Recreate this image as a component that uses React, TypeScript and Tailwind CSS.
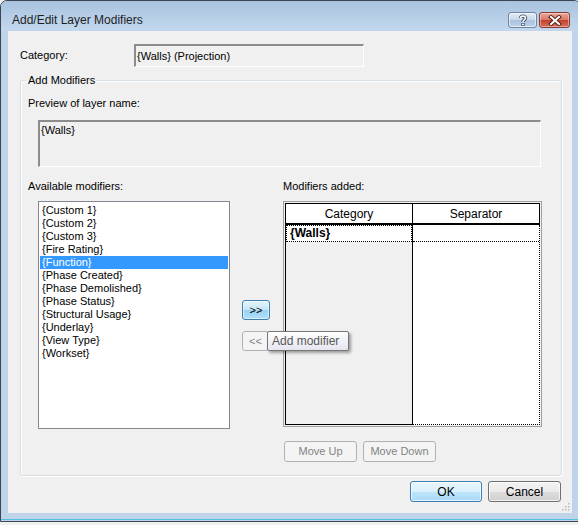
import React from "react";

const font = { fontFamily: '"Liberation Sans", Arial, sans-serif' };

const modifiers = [
  "{Custom 1}",
  "{Custom 2}",
  "{Custom 3}",
  "{Fire Rating}",
  "{Function}",
  "{Phase Created}",
  "{Phase Demolished}",
  "{Phase Status}",
  "{Structural Usage}",
  "{Underlay}",
  "{View Type}",
  "{Workset}",
];

function HelpButton() {
  return (
    <div className="w-[29px] h-[16px] rounded-[3px] border border-[#6e84a2] bg-[linear-gradient(#e3ecf6_0%,#c9d9ec_48%,#aac2de_52%,#bdd1e8_100%)] flex items-center justify-center shadow-[inset_0_0_0_1px_rgba(255,255,255,0.6)]">
      <svg width="10" height="12" viewBox="0 0 10 12">
        <path
          d="M2.5 4 C2.5 1.5 7.5 1.5 7.5 4 C7.5 6 5 6 5 8"
          fill="none"
          stroke="#3b4a5e"
          strokeWidth="3.4"
        />
        <rect x="3.3" y="9" width="3.4" height="2.8" fill="#3b4a5e" />
        <path
          d="M2.5 4 C2.5 1.5 7.5 1.5 7.5 4 C7.5 6 5 6 5 8"
          fill="none"
          stroke="#fff"
          strokeWidth="1.6"
        />
        <rect x="4.1" y="9.6" width="1.8" height="1.6" fill="#fff" />
      </svg>
    </div>
  );
}

function CloseButton() {
  return (
    <div className="w-[31px] h-[16px] rounded-[3px] border border-[#8a3b30] bg-[linear-gradient(#e9a99b_0%,#d77966_48%,#c4412c_52%,#d2705c_100%)] flex items-center justify-center shadow-[inset_0_0_0_1px_rgba(255,255,255,0.4)]">
      <svg width="14" height="11" viewBox="0 0 14 11">
        <path d="M3 2 L11 9 M11 2 L3 9" stroke="#5a1f17" strokeWidth="4" strokeLinecap="square" />
        <path d="M3 2 L11 9 M11 2 L3 9" stroke="#fff" strokeWidth="2" strokeLinecap="square" />
      </svg>
    </div>
  );
}

function DisabledButton({ label, className }: { label: string; className: string }) {
  return (
    <div
      className={`${className} rounded-[3px] border border-[#adb2b5] bg-[#f4f4f4] text-[#838383] flex items-center justify-center text-[11px]`}
    >
      {label}
    </div>
  );
}

export default function App() {
  return (
    <div className="w-[578px] h-[525px] overflow-hidden bg-[#f0f0f0] text-black text-[11px]" style={font}>
      <div className="w-[581px] h-[522px] border border-[#3c4650] rounded-t-[7px] bg-[#bfd3ea] flex flex-col">
        {/* title bar */}
        <div className="h-[30px] flex items-start justify-between bg-[linear-gradient(#a9c3df,#c3d8ee)] rounded-t-[6px]">
          <div className="pl-[11px] pt-[12px] text-[12px] leading-[15px] text-[#1e1e1e]">
            Add/Edit Layer Modifiers
          </div>
          <div className="flex gap-[2px] pt-[11px] pr-[10px]">
            <HelpButton />
            <CloseButton />
          </div>
        </div>

        {/* client area */}
        <div className="ml-[7px] w-[564px] h-[482px] bg-[#f0f0f0] flex flex-col px-[12px] pt-[13px] relative">
          {/* category */}
          <div className="flex items-center h-[23px]">
            <div className="w-[114px] leading-[13px]">Category:</div>
            <div className="w-[230px] h-[23px] border-t-2 border-l-2 border-t-[#8c8c8c] border-l-[#8c8c8c] border-b border-r border-b-white border-r-white bg-[#f0f0f0] flex items-center pl-[1px] leading-[13px]">
              {"{Walls} (Projection)"}
            </div>
          </div>

          {/* group box */}
          <div className="mt-[13px] w-[542px] h-[396px] border border-[#d5dfe5] rounded-[3px] shadow-[inset_1px_1px_0_#fff,1px_1px_0_#fff] relative flex flex-col">
            <div className="absolute left-[5px] top-[-7px] px-[2px] bg-[#f0f0f0] leading-[13px]">
              Add Modifiers
            </div>

            <div className="mt-[16px] ml-[7px] leading-[13px]">Preview of layer name:</div>
            <div className="mt-[10px] ml-[17px] w-[503px] h-[47px] border-t-2 border-l-2 border-t-[#8c8c8c] border-l-[#8c8c8c] border-b border-r border-b-white border-r-white pl-[1px] pt-[2px] leading-[13px]">
              {"{Walls}"}
            </div>

            <div className="mt-[13px] flex leading-[13px]">
              <div className="ml-[7px] w-[255px]">Available modifiers:</div>
              <div>Modifiers added:</div>
            </div>

            <div className="mt-[8px] flex items-start">
              {/* list box */}
              <div className="ml-[17px] w-[192px] h-[228px] border border-[#828790] bg-white pt-[2px] px-[1px] flex flex-col">
                {modifiers.map((m) =>
                  m === "{Function}" ? (
                    <div key={m} className="h-[13px] leading-[13px] px-[2px] bg-[#3399ff] text-white">
                      {m}
                    </div>
                  ) : (
                    <div key={m} className="h-[13px] leading-[13px] px-[2px]">
                      {m}
                    </div>
                  )
                )}
              </div>

              {/* arrow buttons */}
              <div className="ml-[12px] w-[28px] flex flex-col pt-[99px] relative">
                <div className="w-[28px] h-[20px] rounded-[3px] border border-[#3c7fb1] bg-[linear-gradient(#e5f4fc_0%,#c4e5f6_50%,#98d1ef_52%,#b3e0f9_100%)] flex items-center justify-center shadow-[inset_0_0_0_1px_rgba(255,255,255,0.5)]">
                  {">>"}
                </div>
                <DisabledButton label="<<" className="mt-[11px] w-[27px] h-[20px]" />
                {/* tooltip */}
                <div className="absolute left-[25px] top-[130px] w-[82px] h-[20px] rounded-[2px] border border-[#767676] bg-[linear-gradient(#ffffff,#e4e5f0)] text-[#575757] text-[12px] flex items-center pl-[4px] shadow-[2px_2px_3px_rgba(0,0,0,0.35)] whitespace-nowrap">
                  Add modifier
                </div>
              </div>

              {/* grid */}
              <div className="ml-[13px] w-[259px] h-[226px] border border-[#a0a0a0] bg-[#f0f0f0] p-px">
                <div className="h-full border-t border-l border-black flex flex-col">
                  <div className="h-[21px] flex border-b-2 border-black bg-white">
                    <div className="w-[127px] border-r border-black flex items-center justify-center text-[12px]">
                      Category
                    </div>
                    <div className="w-[127px] border-r border-black flex items-center justify-center text-[12px]">
                      Separator
                    </div>
                  </div>
                  <div className="flex-1 flex">
                    <div className="w-[127px] border-r border-b border-black flex flex-col">
                      <div className="h-[17px] bg-white border border-dotted border-black font-bold text-[12px] leading-[15px] pl-[3px]">
                        {"{Walls}"}
                      </div>
                    </div>
                    <div className="w-[127px] bg-white border-r border-b border-dotted border-black flex flex-col">
                      <div className="h-[17px] border-b border-dotted border-black" />
                    </div>
                  </div>
                </div>
              </div>
            </div>

            <div className="mt-[12px] ml-[263px] flex gap-[6px]">
              <DisabledButton label="Move Up" className="w-[73px] h-[21px]" />
              <DisabledButton label="Move Down" className="w-[73px] h-[21px]" />
            </div>
          </div>

          {/* footer */}
          <div className="mt-[5px] flex justify-end gap-[6px] mr-[-1px]">
            <div className="w-[72px] h-[21px] rounded-[3px] border border-[#3c7fb1] bg-[linear-gradient(#eaf6fd_0%,#d9f0fc_50%,#bee6fd_52%,#a7d9f5_100%)] shadow-[inset_0_0_0_1px_rgba(255,255,255,0.7)] flex items-center justify-center text-[12px]">
              OK
            </div>
            <div className="w-[73px] h-[21px] rounded-[3px] border border-[#707070] bg-[linear-gradient(#f2f2f2_0%,#ebebeb_50%,#dddddd_52%,#cfcfcf_100%)] shadow-[inset_0_0_0_1px_rgba(255,255,255,0.7)] flex items-center justify-center text-[12px]">
              Cancel
            </div>
          </div>

          {/* resize grip */}
          <svg className="absolute right-[2px] bottom-[2px]" width="10" height="10" viewBox="0 0 10 10">
            {[
              [8, 2],
              [8, 5],
              [5, 5],
              [8, 8],
              [5, 8],
              [2, 8],
            ].map(([x, y]) => (
              <rect key={`${x}-${y}`} x={x} y={y} width="1.5" height="1.5" fill="#b8b8b8" />
            ))}
          </svg>
        </div>
        <div className="h-[6px]" />
        <div className="h-px bg-[#4fc3dc]" />
      </div>
    </div>
  );
}
